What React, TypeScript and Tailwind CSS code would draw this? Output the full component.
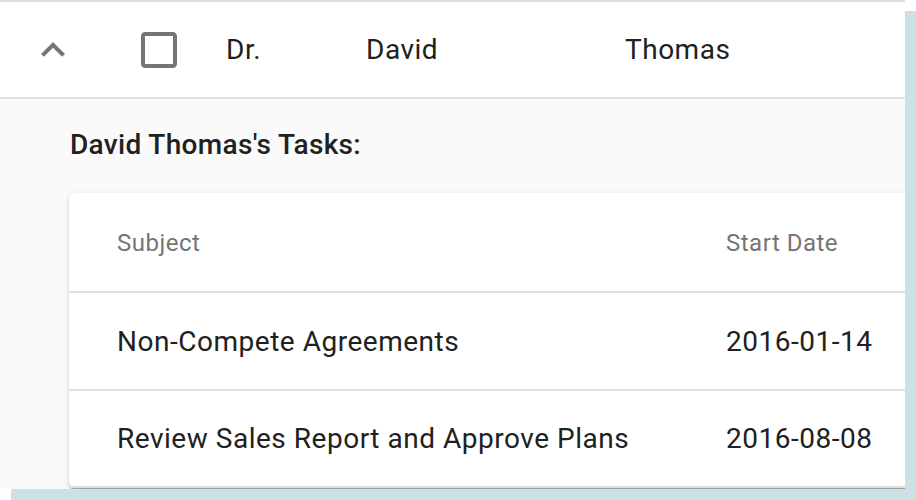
import React from 'react';

const tasks = [
    { subject: 'Non-Compete Agreements', start: '2016-01-14' },
    { subject: 'Review Sales Report and Approve Plans', start: '2016-08-08' },
];

export default function App() {
    return (
        <div className="w-[916px] h-[500px] bg-white overflow-hidden" style={{ fontFamily: 'Roboto, "Noto Sans", sans-serif' }}>
            {/* Panel with offset frame behind it */}
            <div className="w-[905px] h-[489px] overflow-hidden bg-[#fafafa] shadow-[11px_11px_0_0_#cde0e6]">
                {/* Master row */}
                <div className="h-[99px] bg-white border-t-2 border-b-2 border-[#e0e0e0] flex items-center pl-[29px] text-[28px] text-[#212121] tracking-[0.5px]">
                    <svg className="w-12 h-12 shrink-0" viewBox="0 0 24 24" fill="#757575">
                        <path d="M7.41 15.41 12 10.83l4.59 4.58L18 14l-6-6-6 6z" />
                    </svg>
                    <svg className="w-12 h-12 shrink-0 ml-[58px]" viewBox="0 0 24 24" fill="#757575">
                        <path d="M19 5v14H5V5h14m0-2H5c-1.1 0-2 .9-2 2v14c0 1.1.9 2 2 2h14c1.1 0 2-.9 2-2V5c0-1.1-.9-2-2-2z" />
                    </svg>
                    <div className="w-[140px] shrink-0 ml-[43px]">Dr.</div>
                    <div className="w-[259px] shrink-0">David</div>
                    <div className="shrink-0">Thomas</div>
                </div>

                {/* Detail */}
                <div className="pl-[69px] pt-[26px]">
                    <div className="pl-px text-[28px] leading-[40px] font-medium text-[#212121] tracking-[0.33px] mb-[28px]">
                        David Thomas's Tasks:
                    </div>
                    <div className="w-[1000px] bg-white rounded-[6px] shadow-[0_4px_2px_-2px_rgba(0,0,0,0.2),0_2px_2px_0_rgba(0,0,0,0.14),0_2px_6px_0_rgba(0,0,0,0.12)]">
                        <div className="h-[100px] flex items-center pl-[48px] pt-px border-b-2 border-[#e0e0e0] text-[24px] text-[#757575] tracking-[0.5px]">
                            <div className="w-[609px] shrink-0">Subject</div>
                            <div>Start Date</div>
                        </div>
                        {tasks.map((t, i) => (
                            <div
                                key={t.subject}
                                className={`${i === 0 ? 'h-[98px]' : 'h-[97px]'} flex items-center pl-[48px] pt-px border-b-2 border-[#e0e0e0] text-[28px] text-[#212121] tracking-[0.52px]`}
                            >
                                <div className="w-[609px] shrink-0">{t.subject}</div>
                                <div>{t.start}</div>
                            </div>
                        ))}
                    </div>
                </div>
            </div>
        </div>
    );
}
